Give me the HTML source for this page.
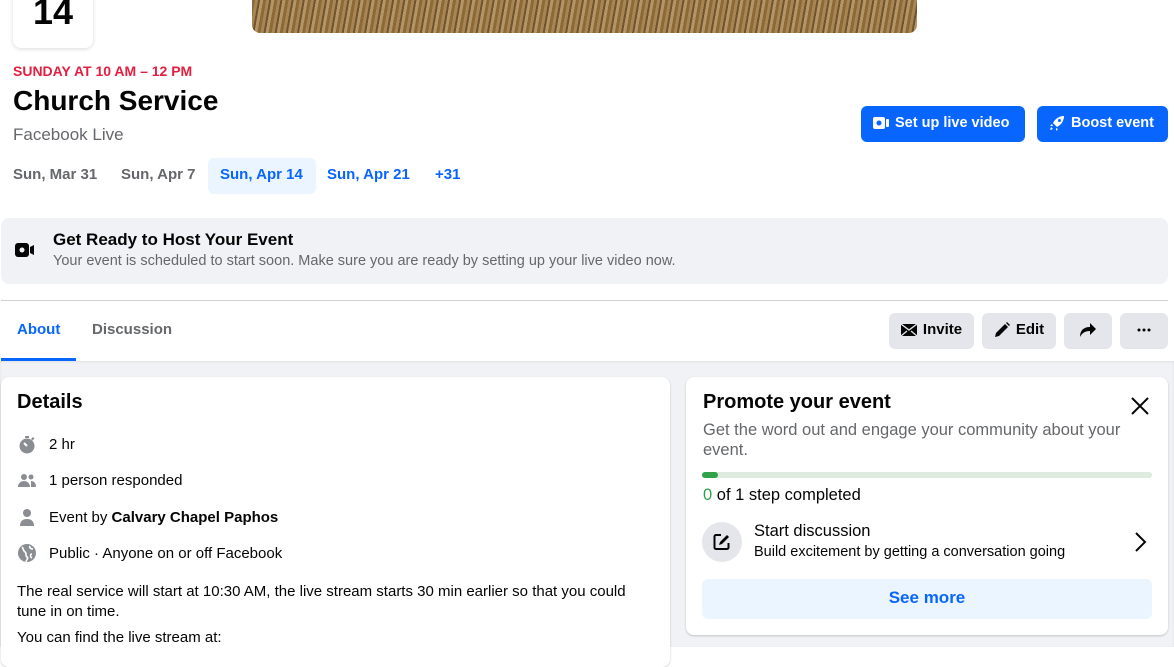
<!DOCTYPE html>
<html><head><meta charset="utf-8"><style>
*{box-sizing:border-box;margin:0;padding:0}
body{width:1174px;height:647px;overflow:hidden;background:#fff;font-family:"Liberation Sans",Arial,sans-serif;color:#050505;position:relative}
.a{position:absolute}
.btn{position:absolute;background:#0866ff;color:#fff;border-radius:6px;font-weight:bold;font-size:14.5px;display:flex;align-items:center;padding-left:11px;padding-bottom:2px}
.gb{position:absolute;background:#e4e6eb;border-radius:6px;font-weight:bold;font-size:15px;display:flex;align-items:center;justify-content:center;gap:6px;padding-bottom:3px}
.row{position:absolute;left:17px;display:flex;align-items:center;font-size:15px}
.row svg{margin-right:12px}
</style></head><body>
<div class="a" style="left:13px;top:-10px;width:80px;height:58px;background:#fff;border-radius:8px;box-shadow:0 1px 4px rgba(0,0,0,.15);text-align:center;font-size:36px;font-weight:bold;line-height:44px">14</div>
<div class="a" style="left:252px;top:0;width:665px;height:33px;border-radius:0 0 8px 8px;background:repeating-linear-gradient(100deg,#8a6a38 0 3px,#a88552 3px 6px,#6e5530 6px 8px,#b79465 8px 11px)"></div>
<div class="a" style="left:13px;top:63px;color:#e41e3f;font-weight:bold;font-size:14px">SUNDAY AT 10 AM – 12 PM</div>
<div class="a" style="left:13px;top:85px;font-weight:bold;font-size:28px">Church Service</div>
<div class="a" style="left:13px;top:125px;color:#65676b;font-size:17px">Facebook Live</div>
<div class="a" style="left:13px;top:166px;font-size:15px;font-weight:bold;color:#65676b">Sun, Mar 31</div>
<div class="a" style="left:121px;top:166px;font-size:15px;font-weight:bold;color:#65676b">Sun, Apr 7</div>
<div class="a" style="left:208px;top:158px;width:108px;height:36px;background:#ebf5ff;border-radius:6px"></div>
<div class="a" style="left:220px;top:166px;font-size:15px;font-weight:bold;color:#0866ff">Sun, Apr 14</div>
<div class="a" style="left:327px;top:166px;font-size:15px;font-weight:bold;color:#0866ff">Sun, Apr 21</div>
<div class="a" style="left:435px;top:166px;font-size:15px;font-weight:bold;color:#0866ff">+31</div>
<div class="btn" style="left:861px;top:106px;width:164px;height:36px"><svg width="18" height="16" viewBox="0 0 18 16" style="margin-right:5px"><rect x="1" y="2" width="12" height="12" rx="2" fill="#fff"/><circle cx="7" cy="8" r="2.5" fill="#0866ff"/><rect x="14" y="4" width="3" height="8" rx="1" fill="#fff"/></svg>Set up live video</div>
<div class="btn" style="left:1037px;top:106px;width:131px;height:36px"><svg width="18" height="18" viewBox="0 0 18 18" style="margin-right:5px"><path d="M16 2C11 2 7 5 5 9l4 4c4-2 7-6 7-11zM4 10l-2 2 3 0zM8 14l0 3 2-2zM3 13l2 2-3 1z" fill="#fff"/><circle cx="11.5" cy="6.5" r="1.5" fill="#0866ff"/></svg>Boost event</div>
<div class="a" style="left:1px;top:218px;width:1167px;height:66px;background:#f0f2f5;border-radius:8px"></div>
<svg class="a" style="left:15px;top:241px" width="20" height="18" viewBox="0 0 20 18"><rect x="0" y="2" width="14" height="14" rx="3" fill="#050505"/><circle cx="7" cy="9" r="2.5" fill="#f0f2f5"/><path d="M15 6l4-2v10l-4-2z" fill="#050505"/></svg>
<div class="a" style="left:53px;top:230px;font-weight:bold;font-size:17px">Get Ready to Host Your Event</div>
<div class="a" style="left:53px;top:253px;font-size:14.5px;color:#65676b">Your event is scheduled to start soon. Make sure you are ready by setting up your live video now.</div>
<div class="a" style="left:1px;top:300px;width:1167px;height:1px;background:#ced0d4"></div>
<div class="a" style="left:17px;top:321px;font-weight:bold;font-size:15px;color:#0866ff">About</div>
<div class="a" style="left:1px;top:358px;width:75px;height:3px;background:#0866ff"></div>
<div class="a" style="left:92px;top:321px;font-weight:bold;font-size:15px;color:#65676b">Discussion</div>
<div class="gb" style="left:889px;top:313px;width:85px;height:36px"><svg width="16" height="12" viewBox="0 0 16 12"><rect width="16" height="12" fill="#050505"/><path d="M0 0l8 6 8-6M0 12l6-5M16 12l-6-5" stroke="#e4e6eb" stroke-width="1.3" fill="none"/></svg>Invite</div>
<div class="gb" style="left:982px;top:313px;width:74px;height:36px"><svg width="16" height="16" viewBox="0 0 16 16"><path d="M1 15l1-4 9-9 3 3-9 9z M12 1l3 3 1-1-3-3z" fill="#050505"/></svg>Edit</div>
<div class="gb" style="left:1064px;top:313px;width:48px;height:36px"><svg width="18" height="16" viewBox="0 0 18 16"><path d="M11 1l6 6-6 6V9C6 9 3 11 1 15c0-6 3-10 10-10z" fill="#050505"/></svg></div>
<div class="gb" style="left:1120px;top:313px;width:48px;height:36px;font-size:15px"><svg width="14" height="4" viewBox="0 0 14 4"><circle cx="2" cy="2" r="1.5" fill="#050505"/><circle cx="7" cy="2" r="1.5" fill="#050505"/><circle cx="12" cy="2" r="1.5" fill="#050505"/></svg></div>
<div class="a" style="left:0;top:361px;width:1174px;height:286px;background:#f0f2f5;box-shadow:inset 0 1px 2px rgba(0,0,0,.08)"></div>
<div class="a" style="left:1px;top:377px;width:669px;height:290px;background:#fff;border-radius:8px;box-shadow:0 1px 2px rgba(0,0,0,.2)"></div>
<div class="a" style="left:17px;top:391px;font-weight:bold;font-size:20px">Details</div>
<div class="row" style="top:434px"><svg width="20" height="20" viewBox="0 0 20 20"><circle cx="10" cy="12" r="7.5" fill="#8a8d91"/><rect x="8" y="2" width="4" height="2" fill="#8a8d91"/><path d="M14 5l2-2 1.5 1.5-2 2z" fill="#8a8d91"/><path d="M10 12l-3-3" stroke="#fff" stroke-width="2"/></svg>2 hr</div>
<div class="row" style="top:471px"><svg width="20" height="18" viewBox="0 0 20 18"><circle cx="7" cy="6" r="3" fill="#8a8d91"/><circle cx="14" cy="6" r="2.5" fill="#8a8d91"/><path d="M1 16c0-4 3-6 6-6s6 2 6 6zM14 10c3 0 5 2 5 6h-5z" fill="#8a8d91"/></svg>1 person responded</div>
<div class="row" style="top:507px"><svg width="20" height="20" viewBox="0 0 20 20"><circle cx="10" cy="6" r="4" fill="#8a8d91"/><path d="M3 19c0-5 3-7 7-7s7 2 7 7z" fill="#8a8d91"/></svg>Event by&nbsp;<b>Calvary Chapel Paphos</b></div>
<div class="row" style="top:543px"><svg width="20" height="20" viewBox="0 0 20 20"><circle cx="10" cy="10" r="9" fill="#8a8d91"/><path d="M5 4c2 2 1 4 3 5s0 4 2 5-1 3-1 5M13 3c-1 2 1 3 3 3M15 11c-2 0-2 3 0 4" stroke="#fff" stroke-width="1.6" fill="none"/></svg>Public · Anyone on or off Facebook</div>
<div class="a" style="left:17px;top:582px;font-size:15px;line-height:20px;width:640px">The real service will start at 10:30 AM, the live stream starts 30 min earlier so that you could tune in on time.</div>
<div class="a" style="left:17px;top:629px;font-size:15px">You can find the live stream at:</div>
<div class="a" style="left:686px;top:377px;width:482px;height:258px;background:#fff;border-radius:8px;box-shadow:0 1px 2px rgba(0,0,0,.2)"></div>
<div class="a" style="left:703px;top:391px;font-weight:bold;font-size:20px">Promote your event</div>
<svg class="a" style="left:1130px;top:396px" width="20" height="20" viewBox="0 0 20 20"><path d="M2 2l16 16M18 2L2 18" stroke="#050505" stroke-width="2"/></svg>
<div class="a" style="left:703px;top:420px;width:440px;font-size:16.5px;line-height:20px;color:#65676b">Get the word out and engage your community about your event.</div>
<div class="a" style="left:702px;top:472px;width:450px;height:6px;border-radius:3px;background:#deebdf"></div>
<div class="a" style="left:702px;top:472px;width:16px;height:6px;border-radius:3px;background:#31a24c"></div>
<div class="a" style="left:703px;top:486px;font-size:16.5px"><span style="color:#31a24c">0</span> of 1 step completed</div>
<div class="a" style="left:702px;top:522px;width:40px;height:40px;border-radius:50%;background:#e4e6eb"></div>
<svg class="a" style="left:712px;top:532px" width="20" height="20" viewBox="0 0 20 20"><path d="M9 3H4a1.5 1.5 0 0 0-1.5 1.5v11A1.5 1.5 0 0 0 4 17h11a1.5 1.5 0 0 0 1.5-1.5V11" stroke="#050505" stroke-width="2" fill="none"/><path d="M7 13l1-3 7-7 2 2-7 7z" fill="#050505"/></svg>
<div class="a" style="left:754px;top:522px;font-size:16.5px">Start discussion</div>
<div class="a" style="left:754px;top:544px;font-size:14.5px">Build excitement by getting a conversation going</div>
<svg class="a" style="left:1133px;top:531px" width="14" height="22" viewBox="0 0 14 22"><path d="M3 2l9 9-9 9" stroke="#050505" stroke-width="2" fill="none"/></svg>
<div class="a" style="left:702px;top:579px;width:450px;height:40px;border-radius:6px;background:#ebf5ff;color:#0866ff;font-weight:bold;font-size:17px;text-align:center;line-height:38px">See more</div>
</body></html>
